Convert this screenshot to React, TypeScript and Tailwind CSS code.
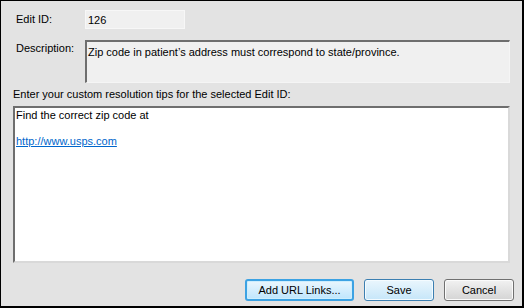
import React from "react";

const font = { fontFamily: '"Liberation Sans", Arial, sans-serif' };

export default function App() {
  return (
    <div
      className="w-[524px] h-[308px] bg-[#e3e3e3] border-l border-t border-r-2 border-b-2 border-black flex flex-col text-[11px] leading-[13px] text-black"
      style={font}
    >
      <div className="mt-[9px] flex">
        <div className="w-[84px] pl-[15px] pt-[3px]">Edit ID:</div>
        <div className="w-[100px] h-[19px] bg-[#f0f0f0] border border-[#f7f7f7] px-[2px] pt-[3px]">126</div>
      </div>
      <div className="mt-[11px] flex">
        <div className="w-[84px] pl-[15px] pt-[2px]">Description:</div>
        <div className="w-[425px] h-[43px] bg-[#f0f0f0] border-t-2 border-l-2 border-t-[#6e6e6e] border-l-[#6e6e6e] border-b border-r border-b-[#f5f5f5] border-r-[#f5f5f5] px-[1px] pt-[4px]">
          Zip code in patient’s address must correspond to state/province.
        </div>
      </div>
      <div className="mt-[5px] pl-[12px]">Enter your custom resolution tips for the selected Edit ID:</div>
      <div className="mt-[5px] ml-[12px] w-[497px] h-[157px] bg-white border-t-2 border-l-2 border-t-[#6e6e6e] border-l-[#6e6e6e] border-b-2 border-r-2 border-b-[#d9d9d9] border-r-[#d9d9d9] px-[1px] pt-[1px]">
        <div>Find the correct zip code at</div>
        <div className="h-[13px]"></div>
        <div className="text-[#0066cc] underline">http://www.usps.com</div>
      </div>
      <div className="mt-[16px] flex justify-end pr-[8px] gap-[10px]">
        <button
          className="w-[109px] h-[22px] rounded-[3px] border-2 border-[#3ca2e3] bg-gradient-to-b from-[#eaf6fd] to-[#bee6fd] text-[11px] text-black shadow-[inset_0_0_0_1px_#cdeefd]"
          style={font}
        >
          Add URL Links...
        </button>
        <button
          className="w-[70px] h-[22px] rounded-[3px] border border-[#3c7fb1] bg-gradient-to-b from-[#eaf6fd] to-[#c6e6f9] text-[11px] text-black shadow-[inset_0_0_0_1px_#f4fbff]"
          style={font}
        >
          Save
        </button>
        <button
          className="w-[70px] h-[22px] rounded-[3px] border border-[#707070] bg-gradient-to-b from-[#f2f2f2] to-[#d4d4d4] text-[11px] text-black shadow-[inset_0_0_0_1px_#fbfbfb]"
          style={font}
        >
          Cancel
        </button>
      </div>
    </div>
  );
}
